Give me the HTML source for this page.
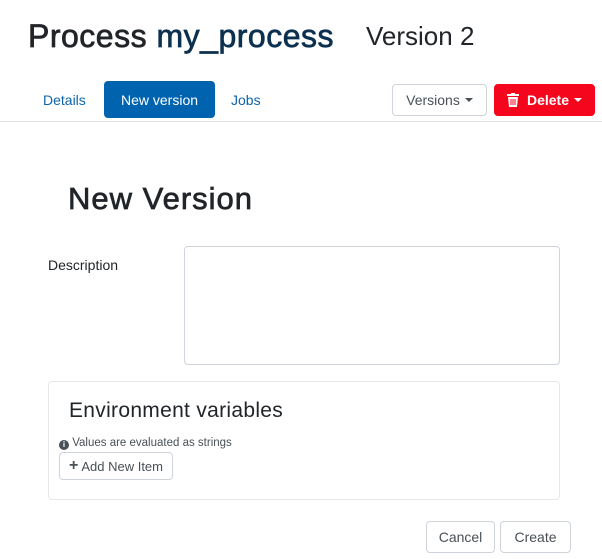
<!DOCTYPE html>
<html><head><style>
*{box-sizing:border-box;margin:0;padding:0}
body{width:602px;height:559px;background:#fff;font-family:"Liberation Sans",sans-serif;color:#212529;position:relative;overflow:hidden}
.a{position:absolute;white-space:nowrap}
.btn{position:absolute;border:1px solid #ced4da;border-radius:4px;background:#fff;color:#495057;font-size:14px;display:flex;align-items:center;justify-content:center}
.car{display:inline-block;width:0;height:0;border-left:4px solid transparent;border-right:4px solid transparent;border-top:4px solid currentColor;margin-left:5px;vertical-align:middle}
</style></head><body>
<div class="a" style="left:28px;top:16px;font-size:32px;line-height:40px;letter-spacing:0.5px;-webkit-text-stroke:0.7px currentColor">Process <span style="color:#0c3050">my_process</span></div>
<div class="a" style="left:366px;top:20px;font-size:26px;line-height:32px">Version 2</div>
<div class="a" style="left:43px;top:92px;font-size:14px;color:#0f63ab">Details</div>
<div class="a" style="left:104px;top:81px;width:111px;height:37px;background:#0063b0;border-radius:4px;color:#fff;font-size:14px;display:flex;align-items:center;justify-content:center">New version</div>
<div class="a" style="left:231px;top:92px;font-size:14px;color:#0f63ab">Jobs</div>
<div class="btn" style="left:392px;top:84px;width:95px;height:32px">Versions<span class="car"></span></div>
<div class="btn" style="left:494px;top:84px;width:101px;height:32px;background:#f5061d;border-color:#f5061d;color:#fff;font-weight:bold">
<svg width="12" height="14" viewBox="0 0 12 14" style="margin-right:8px"><rect x="0" y="1" width="12" height="2" fill="#fff"/><rect x="4" y="0" width="4" height="2" fill="#fff"/><path d="M1 4h10l-1 10H2z" fill="#fff"/><path d="M4 6v6M6 6v6M8 6v6" stroke="#f5061d" stroke-width="1"/></svg>Delete<span class="car"></span></div>
<div class="a" style="left:0;top:121px;width:602px;height:1px;background:#dee2e6"></div>
<div class="a" style="left:68px;top:180px;font-size:31px;line-height:38px;letter-spacing:1px;-webkit-text-stroke:0.7px currentColor">New Version</div>
<div class="a" style="left:48px;top:257px;font-size:14px">Description</div>
<div class="a" style="left:184px;top:246px;width:376px;height:119px;border:1px solid #ced4da;border-radius:4px"></div>
<div class="a" style="left:48px;top:381px;width:512px;height:119px;border:1px solid #e5e7ea;border-radius:4px"></div>
<div class="a" style="left:69px;top:398px;font-size:21px;line-height:26px;letter-spacing:0.3px">Environment variables</div>
<div class="a" style="left:59px;top:437px;font-size:11.5px;color:#495057"><span style="display:inline-block;width:10px;height:10px;border-radius:50%;background:#495057;color:#fff;font-size:8px;line-height:10px;text-align:center;font-weight:bold;vertical-align:-1px">i</span> Values are evaluated as strings</div>
<div class="btn" style="left:59px;top:452px;width:114px;height:28px;font-size:13px"><b style="font-size:16px;margin-right:3px">+</b>Add New Item</div>
<div class="btn" style="left:426px;top:521px;width:69px;height:32px">Cancel</div>
<div class="btn" style="left:500px;top:521px;width:71px;height:32px">Create</div>
</body></html>
